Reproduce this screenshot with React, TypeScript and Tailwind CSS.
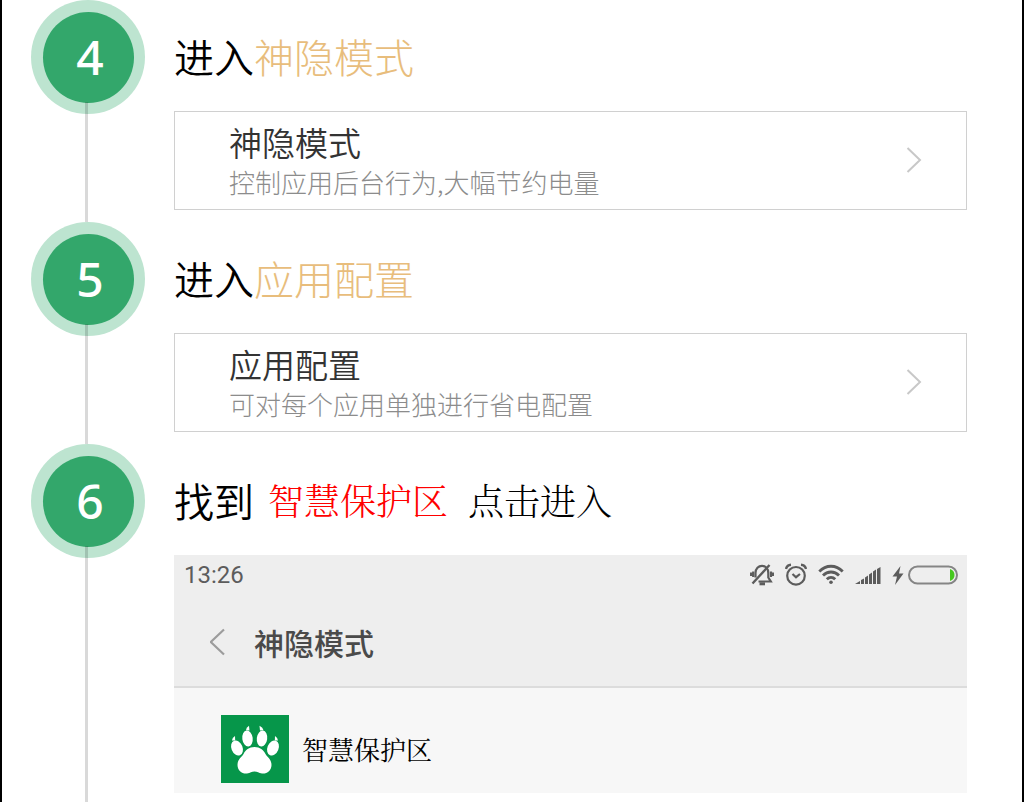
import type { ReactNode } from 'react';

interface StepProps {
  number: number;
  title: ReactNode;
  children: ReactNode;
}

const Step = ({ number, title, children }: StepProps) => {
  return (
    <li className="flex last:flex-1">
      <div className="flex w-[114px] shrink-0 flex-col items-center">
        <div className="flex size-[114px] shrink-0 items-center justify-center rounded-full bg-[#bde4d0]">
          <span className="flex size-[91px] items-center justify-center rounded-full bg-[#33a76b] pl-1 font-['Noto_Sans'] text-5xl font-medium text-white">
            {number}
          </span>
        </div>
        <div className="mr-[3px] -mt-3 w-[3px] flex-1 bg-black/15" />
      </div>
      <div className="ml-[29px] min-w-0 flex-1">
        <h2 className="flex h-[111px] items-center text-[40px] leading-none font-[350] whitespace-nowrap">
          {title}
        </h2>
        {children}
      </div>
    </li>
  );
};

interface SettingRowProps {
  label: string;
  description: string;
}

const SettingRow = ({ label, description }: SettingRowProps) => {
  return (
    <button
      type="button"
      className="mb-3 flex h-[99px] w-full items-center justify-between border border-[#d0d0d0] bg-white pr-11 pl-[54px] text-left"
    >
      <span className="flex flex-col pt-0.5 whitespace-nowrap">
        <span className="text-[33px] leading-10 font-[350] text-[#333333]">{label}</span>
        <span className="text-[26px] leading-10 font-light text-[#8c8c8c]">{description}</span>
      </span>
      <svg className="h-7 w-4" viewBox="0 0 16 28" fill="none" stroke="#c8c8c8" strokeWidth="2">
        <path d="M1.5 1 L14 13 L1.5 25" />
      </svg>
    </button>
  );
};

const StatusIcons = () => {
  return (
    <div className="flex items-center gap-[11px] text-[#5c5c5c]">
      {/* muted bell */}
      <svg className="h-6 w-6" viewBox="0 0 24 24" fill="none" stroke="currentColor" strokeWidth="2.2">
        <path d="M5.5 14.5 V10 C5.5 5.5 8.5 2.8 12 2.8 C15.5 2.8 18.3 5.5 18.3 10 V14.5 L20.8 18.5 H8.5" />
        <path d="M2.5 20.5 L19.5 2" strokeWidth="2.4" />
        <path d="M9.5 20.8 H15" strokeWidth="3" />
        <path d="M3.2 8.5 V14 M1 9.5 V13 M21 8.5 V14 M23 9.5 V13" strokeWidth="2.2" />
      </svg>
      {/* alarm */}
      <svg className="h-6 w-[22px]" viewBox="0 0 22 24" fill="none" stroke="currentColor" strokeWidth="2.2">
        <circle cx="11" cy="12.8" r="8.8" />
        <path d="M7.5 11 L11 14.2 L15 11" />
        <path d="M1 6 C1.5 3.5 3.5 2 6 1.8 M21 6 C20.5 3.5 18.5 2 16 1.8" strokeWidth="2.4" />
      </svg>
      {/* wifi */}
      <svg className="h-6 w-[26px]" viewBox="0 0 26 24" fill="none" stroke="currentColor" strokeWidth="2.8">
        <path d="M1.3 8.5 C8 1.5 18 1.5 24.7 8.5" />
        <path d="M5 12.5 C9.5 7.8 16.5 7.8 21 12.5" />
        <path d="M8.8 16.3 C11.3 13.7 14.7 13.7 17.2 16.3" />
        <circle cx="13" cy="19.3" r="1.8" fill="currentColor" stroke="none" />
      </svg>
      {/* signal */}
      <svg className="h-6 w-[26px]" viewBox="0 0 26 24" fill="currentColor">
        <path d="M0 21 L5 18 V21 Z M6 17 L9 15.5 V21 H6 Z M10 14.5 L13 12.5 V21 H10 Z M14 11.5 L17 9.5 V21 H14 Z M18 8.5 L21 6.5 V21 H18 Z M22 6 L25.5 4 V21 H22 Z" />
      </svg>
      <div className="flex items-center gap-1">
        <svg className="h-6 w-3" viewBox="0 0 12 24" fill="currentColor">
          <path d="M8.5 3 L0.5 13.5 H5 L3 22 L11.5 10.5 H7 Z" />
        </svg>
        <svg className="h-6 w-[50px]" viewBox="0 0 50 24" fill="none">
          <rect x="1" y="3.5" width="48" height="17" rx="8.5" stroke="#858585" strokeWidth="2" />
          <path d="M42 6 C48 7.5 48 16.5 42 18 Z" fill="#46c81e" />
        </svg>
      </div>
    </div>
  );
};

const PawLogo = () => {
  return (
    <svg className="size-[68px] shrink-0" viewBox="0 0 68 68">
      <rect width="68" height="68" fill="#06964a" />
      <g fill="#fff">
        <path d="M33.5 32 C39 32 42.5 35 44.5 39 C46.5 42.5 50.5 44 50.5 50 C50.5 55.5 46 59 41 58.5 C37.5 58 36.5 56.5 33.5 56.5 C30.5 56.5 29.5 58 26 58.5 C21 59 16.5 55.5 16.5 50 C16.5 44 20.5 42.5 22.5 39 C24.5 35 28 32 33.5 32 Z" />
        <ellipse cx="26.5" cy="23.5" rx="5.2" ry="8" transform="rotate(-7 26.5 23.5)" />
        <ellipse cx="41" cy="23.5" rx="5.2" ry="8" transform="rotate(7 41 23.5)" />
        <ellipse cx="16" cy="33" rx="5.6" ry="7.8" transform="rotate(-22 16 33)" />
        <ellipse cx="52" cy="33" rx="5.6" ry="7.8" transform="rotate(22 52 33)" />
        <path d="M25 15.2 Q25 12.5 28 10.8 L28.5 15.5 Z" />
        <path d="M42.5 15.2 Q42 12.5 38.5 10.8 L39 15.5 Z" />
        <path d="M11 25.5 Q10.8 23 14 21 L14.2 25.5 Z" />
        <path d="M57 25.5 Q57 23 54 21 L53.8 25.5 Z" />
      </g>
    </svg>
  );
};

const PhoneScreen = () => {
  return (
    <div className="bg-[#f7f7f7]">
      <div className="border-b-2 border-[#dcdcdc] bg-[#eeeeee]">
        <div className="flex h-10 items-center justify-between pr-[9px] pl-[10px]">
          <time className="font-[Roboto] text-2xl text-[#5c5c5c]">13:26</time>
          <StatusIcons />
        </div>
        <div className="flex h-[91px] items-center gap-7 pt-0.5 pl-9">
          <button type="button" aria-label="返回">
            <svg className="h-7 w-4" viewBox="0 0 16 28" fill="none" stroke="#9c9c9c" strokeWidth="2.2">
              <path d="M14 1.5 L0.8 14 L14 26.5" />
            </svg>
          </button>
          <h3 className="text-3xl font-medium text-[#4a4a4a]">神隐模式</h3>
        </div>
      </div>
      <button type="button" className="flex w-full items-center gap-[13px] pt-[27px] pb-[10px] pl-[47px] text-left">
        <PawLogo />
        <span className="font-['SimSun','Noto_Serif_CJK_SC','Noto_Sans_CJK_SC',serif] text-[26px] leading-none">
          智慧保护区
        </span>
      </button>
    </div>
  );
};

export default function App() {
  return (
    <main className="flex min-h-screen flex-col border-x-2 border-black bg-white font-['Noto_Sans_CJK_SC',sans-serif] text-black">
      <ol className="flex flex-1 flex-col pr-[55px] pl-[29px]">
        <Step
          number={4}
          title={
            <>
              进入<span className="font-light text-[#e8bd7c]">神隐模式</span>
            </>
          }
        >
          <SettingRow label="神隐模式" description="控制应用后台行为,大幅节约电量" />
        </Step>
        <Step
          number={5}
          title={
            <>
              进入<span className="font-light text-[#e8bd7c]">应用配置</span>
            </>
          }
        >
          <SettingRow label="应用配置" description="可对每个应用单独进行省电配置" />
        </Step>
        <Step
          number={6}
          title={
            <>
              找到
              <span className="flex gap-5 pl-[14px] font-['SimSun','Noto_Serif_CJK_SC','Noto_Sans_CJK_SC',serif] text-4xl leading-none">
                <span className="text-[#ff0000]">智慧保护区</span>
                <span>点击进入</span>
              </span>
            </>
          }
        >
          <PhoneScreen />
        </Step>
      </ol>
    </main>
  );
}
